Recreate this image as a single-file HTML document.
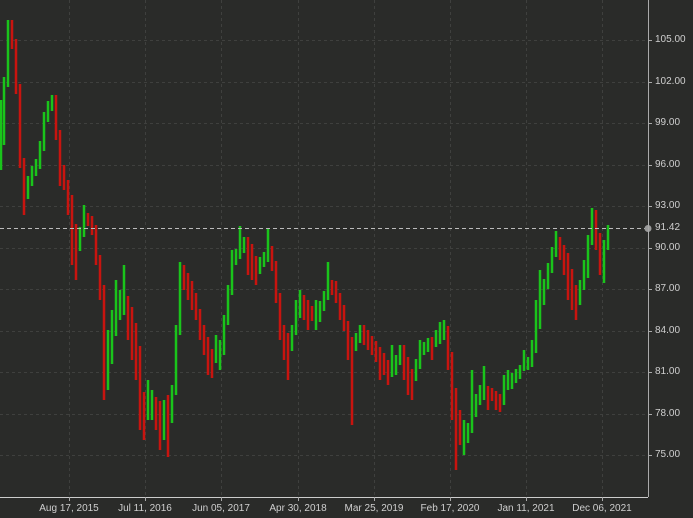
<!DOCTYPE html>
<html><head><meta charset="utf-8"><style>
html,body{margin:0;padding:0;background:#2a2b29;}
#w{position:relative;width:693px;height:518px;overflow:hidden;background:#2a2b29;font-family:"Liberation Sans",sans-serif;}
.yl{position:absolute;left:655px;font-size:10px;color:#cfcfcf;line-height:10px;}
.xl{position:absolute;top:503px;font-size:10px;color:#cfcfcf;transform:translateX(-50%);white-space:nowrap;}
</style></head><body><div id="w">
<svg width="693" height="518" style="position:absolute;left:0;top:0">
<g stroke="#3f403e" stroke-dasharray="3,3" stroke-width="1">
<line x1="0" x2="648" y1="40.5" y2="40.5"/><line x1="0" x2="648" y1="82.5" y2="82.5"/><line x1="0" x2="648" y1="123.5" y2="123.5"/><line x1="0" x2="648" y1="165.5" y2="165.5"/><line x1="0" x2="648" y1="206.5" y2="206.5"/><line x1="0" x2="648" y1="248.5" y2="248.5"/><line x1="0" x2="648" y1="289.5" y2="289.5"/><line x1="0" x2="648" y1="331.5" y2="331.5"/><line x1="0" x2="648" y1="372.5" y2="372.5"/><line x1="0" x2="648" y1="414.5" y2="414.5"/><line x1="0" x2="648" y1="455.5" y2="455.5"/>
<line y1="0" y2="497" x1="69.5" x2="69.5"/><line y1="0" y2="497" x1="145.5" x2="145.5"/><line y1="0" y2="497" x1="221.5" x2="221.5"/><line y1="0" y2="497" x1="298.5" x2="298.5"/><line y1="0" y2="497" x1="374.5" x2="374.5"/><line y1="0" y2="497" x1="450.5" x2="450.5"/><line y1="0" y2="497" x1="526.5" x2="526.5"/><line y1="0" y2="497" x1="602.5" x2="602.5"/>
</g>
<path stroke="#1ac41b" stroke-width="2.5" fill="none" d="M1 100V170M4 77V145M8 20V87M28 176V199M32 166V186M36 159V176M40 141V169M44 112V151M48 101V122M52 95V111M80 227V251M84 205V237M108 330V390M112 310V364M116 280V336M120 290V320M124 265V315M148 380V420M152 390V420M164 400V440M172 385V423M176 325V395M180 262V335M216 335V363M220 340V370M224 315V355M228 285V325M232 250V295M236 249V265M240 226V259M244 237V253M260 257V274M264 252V267M268 228V262M292 325V351M296 300V335M300 290V318M316 300V330M320 301V322M324 291V311M328 262V300M356 333V351M360 325V343M392 345V377M396 355V375M400 345V365M416 359V381M420 340V369M424 342V355M428 338V352M436 330V347M440 322V344M444 320V340M464 420V455M468 423V443M472 370V433M476 394V417M480 385V405M484 366V400M504 375V405M508 370V390M512 373V389M516 369V383M520 365V379M524 350V371M528 357V370M532 340V367M536 300V353M540 270V329M544 279V305M548 263V289M552 247V273M556 231V257M580 280V305M584 260V290M588 235V278M592 208V245M604 240V283M608 225V250"/>
<path stroke="#c8140f" stroke-width="2.5" fill="none" d="M12 20V49M16 39V94M20 84V168M24 158V215M56 95V140M60 130V186M64 165V190M68 180V215M72 195V265M76 224V280M88 213V226M92 216V235M96 225V265M100 255V300M104 285V400M128 296V340M132 307V360M136 323V380M140 346V430M144 392V440M156 397V430M160 401V450M168 395V457M184 265V290M188 273V300M192 281V310M196 293V320M200 309V340M204 325V355M208 337V375M212 349V378M248 237V275M252 244V280M256 256V285M272 246V271M276 261V303M280 293V340M284 325V360M288 333V380M304 295V320M308 300V330M312 306V321M332 280V295M336 281V303M340 293V320M344 305V331M348 321V360M352 337V425M364 325V345M368 330V350M372 336V355M376 341V362M380 347V380M384 353V375M388 360V385M404 345V380M408 357V395M412 369V400M432 337V360M448 326V370M452 352V420M456 388V470M460 410V445M488 386V410M492 388V401M496 391V410M500 394V412M560 237V260M564 245V275M568 253V300M572 269V310M576 285V320M596 210V250M600 233V275"/>
<line x1="0" x2="648" y1="228.5" y2="228.5" stroke="#bbbbbb" stroke-dasharray="4,3"/>
<circle cx="648" cy="228.5" r="3.5" fill="#9a9a9a"/>
<line x1="648.5" x2="648.5" y1="0" y2="497" stroke="#aaaaaa"/>
<line x1="0" x2="648" y1="497.5" y2="497.5" stroke="#cccccc"/>
<g stroke="#aaaaaa">
<line x1="648" x2="652" y1="40.5" y2="40.5"/><line x1="648" x2="652" y1="82.5" y2="82.5"/><line x1="648" x2="652" y1="123.5" y2="123.5"/><line x1="648" x2="652" y1="165.5" y2="165.5"/><line x1="648" x2="652" y1="206.5" y2="206.5"/><line x1="648" x2="652" y1="248.5" y2="248.5"/><line x1="648" x2="652" y1="289.5" y2="289.5"/><line x1="648" x2="652" y1="331.5" y2="331.5"/><line x1="648" x2="652" y1="372.5" y2="372.5"/><line x1="648" x2="652" y1="414.5" y2="414.5"/><line x1="648" x2="652" y1="455.5" y2="455.5"/>
<line y1="497" y2="501" x1="69.5" x2="69.5"/><line y1="497" y2="501" x1="145.5" x2="145.5"/><line y1="497" y2="501" x1="221.5" x2="221.5"/><line y1="497" y2="501" x1="298.5" x2="298.5"/><line y1="497" y2="501" x1="374.5" x2="374.5"/><line y1="497" y2="501" x1="450.5" x2="450.5"/><line y1="497" y2="501" x1="526.5" x2="526.5"/><line y1="497" y2="501" x1="602.5" x2="602.5"/>
</g>
</svg>
<div class="yl" style="top:35px">105.00</div><div class="yl" style="top:77px">102.00</div><div class="yl" style="top:118px">99.00</div><div class="yl" style="top:160px">96.00</div><div class="yl" style="top:201px">93.00</div><div class="yl" style="top:223px">91.42</div><div class="yl" style="top:243px">90.00</div><div class="yl" style="top:284px">87.00</div><div class="yl" style="top:326px">84.00</div><div class="yl" style="top:367px">81.00</div><div class="yl" style="top:409px">78.00</div><div class="yl" style="top:450px">75.00</div>
<div class="xl" style="left:69px">Aug 17, 2015</div><div class="xl" style="left:145px">Jul 11, 2016</div><div class="xl" style="left:221px">Jun 05, 2017</div><div class="xl" style="left:298px">Apr 30, 2018</div><div class="xl" style="left:374px">Mar 25, 2019</div><div class="xl" style="left:450px">Feb 17, 2020</div><div class="xl" style="left:526px">Jan 11, 2021</div><div class="xl" style="left:602px">Dec 06, 2021</div>
</div>
</body></html>
